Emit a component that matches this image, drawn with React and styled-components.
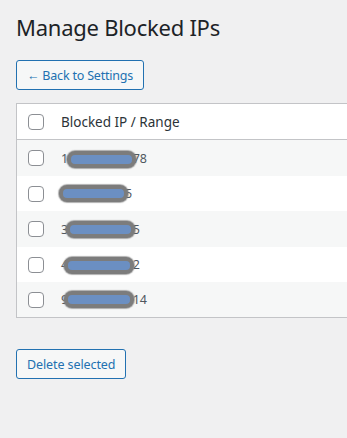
import React from 'react';
import styled, { createGlobalStyle } from 'styled-components';

const Global = createGlobalStyle`
  html, body { margin: 0; padding: 0; background: #f0f0f1; overflow: hidden; }
  body { font-family: "Noto Sans", "Open Sans", sans-serif; color: #3c434a; font-size: 13px; }
`;

const Page = styled.div`
  padding: 12px 0 0 16px;
  width: 440px;
`;

const Title = styled.h1`
  margin: 0;
  font-size: 22px;
  letter-spacing: -0.25px;
  font-weight: 400;
  line-height: 30px;
  color: #1d2327;
`;

const Button = styled.button`
  display: inline-flex;
  align-items: center;
  box-sizing: border-box;
  height: 30px;
  padding: 0 10px;
  margin-top: ${(p) => p.$top}px;
  border: 1px solid #2271b1;
  border-radius: 3px;
  background: #f6f7f7;
  color: #2271b1;
  font-family: inherit;
  font-size: 12.5px;
  letter-spacing: ${(p) => p.$ls}px;
  cursor: pointer;
`;

const Table = styled.div`
  margin-top: 13px;
  width: 400px;
  background: #fff;
  border: 1px solid #c3c4c7;
`;

const Row = styled.div`
  display: flex;
  align-items: center;
  gap: 17px;
  box-sizing: border-box;
  height: ${(p) => p.$h}px;
  padding-left: 11px;
  background: ${(p) => (p.$striped ? '#f6f7f7' : '#fff')};
  border-bottom: ${(p) => (p.$head ? '1px solid #c3c4c7' : 'none')};
`;

const Check = styled.span`
  flex: none;
  width: 16px;
  height: 16px;
  box-sizing: border-box;
  border: 1px solid #8c8f94;
  border-radius: 4px;
  background: #fff;
`;

const HeadText = styled.span`
  font-size: 13.5px;
  color: #2c3338;
`;

const Cell = styled.span`
  display: inline-flex;
  align-items: center;
  color: #50575e;
  font-size: 12.5px;
`;

const Redact = styled.span`
  position: relative;
  z-index: 1;
  display: inline-block;
  box-sizing: border-box;
  width: ${(p) => p.$w}px;
  height: 17px;
  margin-left: ${(p) => p.$ml}px;
  margin-right: ${(p) => p.$mr}px;
  top: ${(p) => p.$dy || 0}px;
  border: 4px solid #7c7c7c;
  border-radius: 8px;
  background: #6b8fc2;
  box-shadow: 0 0 1px 1px rgba(124,124,124,0.6);
`;

const rows = [
  { pre: '1', suf: '78', ml: -1.5, w: 69, mr: -3, dy: 1 },
  { pre: '', suf: '5', ml: -2, w: 69, mr: -3, dy: 0 },
  { pre: '3', suf: '5', ml: -2.5, w: 69, mr: -2, dy: 0 },
  { pre: '4', suf: '2', ml: -4, w: 70, mr: -1.5, dy: 1 },
  { pre: '9', suf: '14', ml: -4, w: 70, mr: -1.5, dy: 0 },
];

const heights = [36, 35, 36, 35, 35];

export default function App() {
  return (
    <>
      <Global />
      <Page>
        <Title>Manage Blocked IPs</Title>
        <Button $top={18} $ls={-0.2}>← Back to Settings</Button>
        <Table>
          <Row $head $h={36}>
            <Check />
            <HeadText>Blocked IP / Range</HeadText>
          </Row>
          {rows.map((r, i) => (
            <Row key={i} $striped={i % 2 === 0} $h={heights[i]}>
              <Check />
              <Cell>
                {r.pre}
                <Redact $ml={r.ml} $w={r.w} $mr={r.mr} $dy={r.dy} />
                {r.suf}
              </Cell>
            </Row>
          ))}
        </Table>
        <Button $top={31} $ls={-0.1}>Delete selected</Button>
      </Page>
    </>
  );
}
